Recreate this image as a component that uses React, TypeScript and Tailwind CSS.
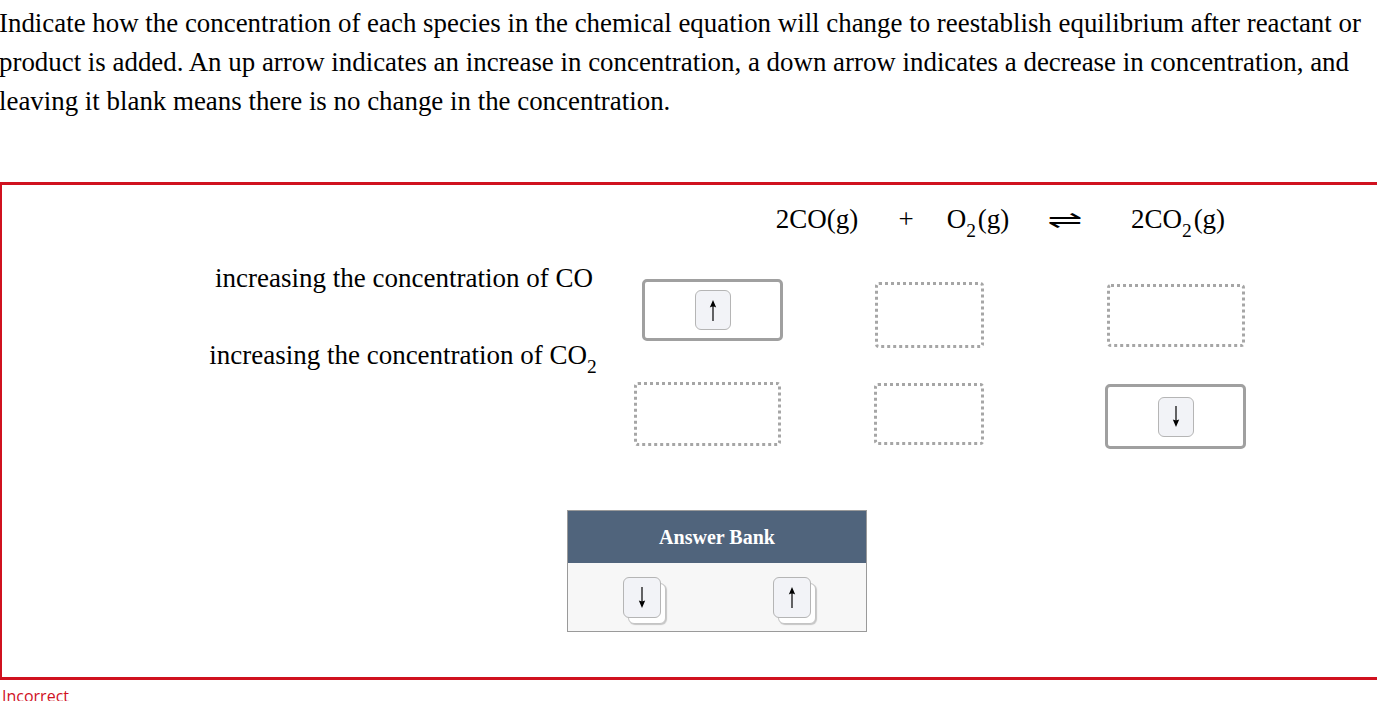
const Arrow = ({ up }: { up: boolean }) => (
  <svg width="10" height="21" viewBox="0 0 10 21" className={up ? '' : 'rotate-180'}>
    <line x1="5" y1="5" x2="5" y2="21" stroke="#000" strokeWidth="1.2" />
    <path d="M5 0 L8.2 7.4 Q5 5.8 1.8 7.4 Z" fill="#000" />
  </svg>
)

const Tile = ({ up }: { up: boolean }) => (
  <div className="w-[36px] h-[40px] flex items-center justify-center rounded-[6px] border border-[#b5b5b5] bg-[#f2f3f7]">
    <Arrow up={up} />
  </div>
)

const BankTile = ({ up }: { up: boolean }) => (
  <div className="relative w-[43px] h-[47px]">
    <div className="absolute left-[5px] top-[6px] w-[38px] h-[41px] rounded-[6px] border border-[#c4c4c4] bg-white shadow-[1px_1px_1px_rgba(0,0,0,0.2)]" />
    <div className="absolute left-0 top-0 w-[38px] h-[41px] flex items-center justify-center rounded-[6px] border border-[#b5b5b5] bg-[#f2f3f7]">
      <Arrow up={up} />
    </div>
  </div>
)

const Solid = ({ w, h, up }: { w: string; h: string; up: boolean }) => (
  <div className={`${w} ${h} flex items-center justify-center rounded-[5px] border-[3px] border-[#a0a0a0] bg-white`}>
    <Tile up={up} />
  </div>
)

const Sub = ({ children }: { children: string }) => (
  <span className="inline-block text-[0.72em] leading-none translate-y-[0.45em] mr-[2px]">{children}</span>
)

export default function App() {
  return (
    <div className="w-[1377px] h-[701px] overflow-hidden bg-white font-['Liberation_Serif',serif] text-black">
      <p className="ml-[-1px] pt-[4px] w-[1372px] text-[26.9px] leading-[39px]">
        Indicate how the concentration of each species in the chemical equation will change to reestablish equilibrium after reactant or
        product is added. An up arrow indicates an increase in concentration, a down arrow indicates a decrease in concentration, and
        leaving it blank means there is no change in the concentration.
      </p>

      <div className="mt-[61px] ml-[-1px] w-[1420px] h-[498px] border-[3px] border-[#d0111f]">
        {/* equation */}
        <div className="flex pt-[16px] pl-[757px] text-[27px] leading-[36px]">
          <div className="w-[116px] text-center">2CO(g)</div>
          <div className="w-[62px] text-center">+</div>
          <div className="w-[82px] text-center">
            O<Sub>2</Sub>(g)
          </div>
          <div className="w-[92px] text-center">
            <span className="inline-block scale-x-[1.75] font-['DejaVu_Sans',sans-serif] text-[24px]">⇌</span>
          </div>
          <div className="w-[134px] text-center">
            2CO<Sub>2</Sub>(g)
          </div>
        </div>

        <div className="flex mt-[19px]">
          {/* labels */}
          <div className="w-[406px] ml-[199px] flex flex-col items-center gap-[41px] pt-[3px] text-[27px] leading-[36px]">
            <div>increasing the concentration of CO</div>
            <div>
              increasing the concentration of CO<Sub>2</Sub>
            </div>
          </div>

          {/* boxes */}
          <div className="flex flex-col">
            <div className="flex items-start">
              <div className="ml-[35px] mt-[22px]">
                <Solid w="w-[141px]" h="h-[62px]" up />
              </div>
              <div className="ml-[92px] mt-[25px] w-[109px] h-[66px] rounded-[4px] border-[3px] border-dotted border-[#a6a6a6]" />
              <div className="ml-[123px] mt-[27px] w-[138px] h-[63px] rounded-[4px] border-[3px] border-dotted border-[#a6a6a6]" />
            </div>
            <div className="flex items-start">
              <div className="ml-[27px] mt-[34px] w-[147px] h-[64px] rounded-[4px] border-[3px] border-dotted border-[#a6a6a6]" />
              <div className="ml-[93px] mt-[35px] w-[110px] h-[62px] rounded-[4px] border-[3px] border-dotted border-[#a6a6a6]" />
              <div className="ml-[121px] mt-[36px]">
                <Solid w="w-[141px]" h="h-[65px]" up={false} />
              </div>
            </div>
          </div>
        </div>

        {/* answer bank */}
        <div className="mt-[61px] ml-[565px] w-[300px] border border-[#9a9a9a]">
          <div className="h-[52px] bg-[#50647c] flex items-center justify-center text-white font-bold text-[20px]">
            Answer Bank
          </div>
          <div className="h-[68px] bg-[#f7f7f7] flex items-start pt-[14px] pl-[55px] gap-[107px]">
            <BankTile up={false} />
            <BankTile up />
          </div>
        </div>
      </div>

      <div className="pl-[2px] pt-[6px] font-['Open_Sans',sans-serif] text-[16px] leading-[20px] text-[#d0111f]">
        Incorrect
      </div>
    </div>
  )
}
